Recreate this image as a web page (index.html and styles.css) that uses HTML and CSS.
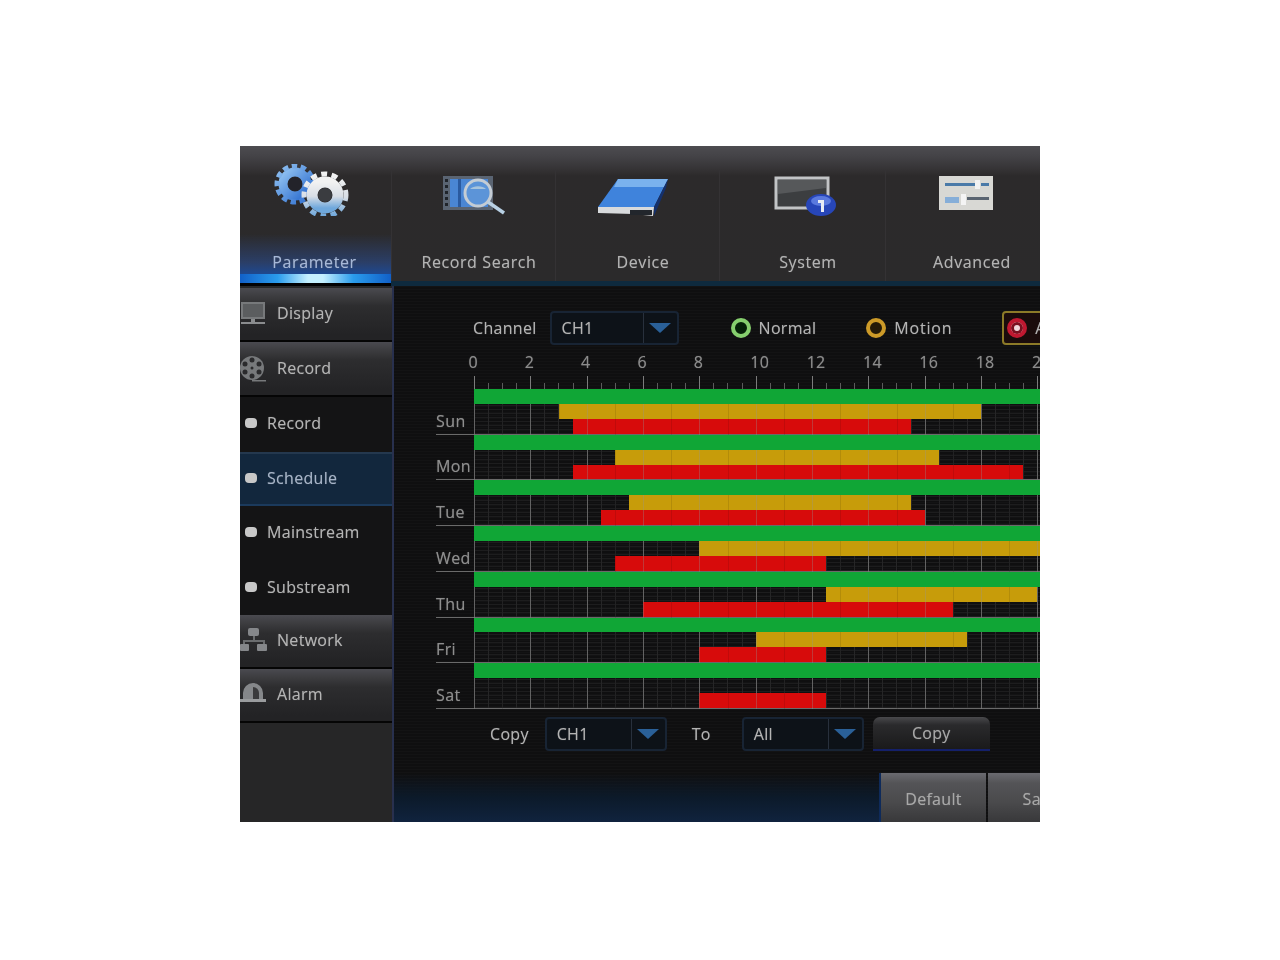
FILE: index.html
```html
<!DOCTYPE html>
<html lang="en">
<head>
<meta charset="utf-8">
<title>Schedule</title>
<link rel="stylesheet" href="styles.css">
</head>
<body>
<div class="app">
  <nav class="topbar">
    <div class="tab tab-active">
      <svg class="tab-icon icon-gears" width="84" height="52" viewBox="0 0 84 52">
        <defs>
          <linearGradient id="gw" x1="0" y1="0" x2="0" y2="1"><stop offset="0" stop-color="#f2f2f2"/><stop offset=".55" stop-color="#d8dee6"/><stop offset="1" stop-color="#6fa8dc"/></linearGradient>
          <linearGradient id="gb" x1="0" y1="0" x2="1" y2="1"><stop offset="0" stop-color="#8fc0f0"/><stop offset="1" stop-color="#2f6fd0"/></linearGradient>
        </defs>
        <circle cx="24" cy="20" r="12" fill="none" stroke="url(#gb)" stroke-width="9"/>
        <circle cx="24" cy="20" r="18" fill="none" stroke="url(#gb)" stroke-width="5" stroke-dasharray="5.5 3.5"/>
        <circle cx="24" cy="20" r="7" fill="#23232a"/>
        <circle cx="54" cy="31" r="13" fill="none" stroke="url(#gw)" stroke-width="11"/>
        <circle cx="54" cy="31" r="21" fill="none" stroke="url(#gw)" stroke-width="5" stroke-dasharray="6 4.5"/>
        <circle cx="54" cy="31" r="7" fill="#3a3c40"/>
      </svg>
      <span class="tab-label tab-label-active">Parameter</span>
    </div>
    <div class="tab">
      <svg class="tab-icon icon-search" width="64" height="42" viewBox="0 0 64 42">
        <rect x="1" y="2" width="50" height="34" fill="#5a6472"/>
        <rect x="8" y="5" width="38" height="28" fill="#4a86d4"/>
        <path d="M3 5h3v3H3zM3 11h3v3H3zM3 17h3v3H3zM3 23h3v3H3zM3 29h3v3H3z" fill="#20242a"/>
        <path d="M16 5h3v28h-3z" fill="#2a5aa0"/>
        <circle cx="36" cy="19" r="13" fill="#5c94d8" stroke="#c4ccd4" stroke-width="3"/>
        <path d="M28 15a10 7 0 0 1 16 0z" fill="#a8c4dc"/>
        <path d="M46 28l16 11" stroke="#b8d0e4" stroke-width="3.5"/>
      </svg>
      <span class="tab-label label-search">Record Search</span>
    </div>
    <div class="tab">
      <svg class="tab-icon icon-device" width="74" height="42" viewBox="0 0 74 42">
        <path d="M22 2h50L58 30H2z" fill="#3f83dc"/>
        <path d="M22 2h50l-4 8H18z" fill="#7ab2ee"/>
        <path d="M2 30h56l-1 9-20-2-35-1z" fill="#d8dadc"/>
        <path d="M58 30L72 2l-2 9-12 28z" fill="#14306c"/>
        <path d="M34 33h22v5H34z" fill="#22262c"/>
      </svg>
      <span class="tab-label label-device">Device</span>
    </div>
    <div class="tab">
      <svg class="tab-icon icon-system" width="64" height="42" viewBox="0 0 64 42">
        <rect x="2" y="2" width="52" height="30" fill="#3c3e40" stroke="#c2c4c6" stroke-width="3"/>
        <path d="M4 4h48v8L4 18z" fill="#56585a"/>
        <ellipse cx="47" cy="29" rx="15" ry="11" fill="#2746b8"/>
        <ellipse cx="47" cy="25" rx="10" ry="5" fill="#5b7ade"/>
        <path d="M44 24h6v12h-3V27h-3z" fill="#e8ecf4"/>
      </svg>
      <span class="tab-label label-system">System</span>
    </div>
    <div class="tab tab-last">
      <svg class="tab-icon icon-advanced" width="56" height="36" viewBox="0 0 56 36">
        <rect x="1" y="1" width="54" height="34" fill="#d8d8d4"/>
        <path d="M7 8h30v3H7zM43 8h8v3h-8z" fill="#4a7aa8"/>
        <path d="M7 22h14v6H7z" fill="#86aed8"/>
        <path d="M29 22h22v3H29z" fill="#5a6470"/>
        <rect x="37" y="5" width="5" height="9" fill="#f2f2f2"/>
        <rect x="23" y="19" width="5" height="11" fill="#f4f4f4"/>
      </svg>
      <span class="tab-label label-advanced">Advanced</span>
    </div>
  </nav>

  <div class="content">
    <aside class="sidebar">
      <div class="menu-item">
        <svg class="menu-icon" width="26" height="26" viewBox="0 0 26 26"><rect x="1" y="2" width="24" height="17" fill="#77797b"/><rect x="3" y="4" width="20" height="13" fill="#5b5d5f"/><path d="M11 19h4v3h-4zM1 22h24v2H1z" fill="#8a8c8e"/></svg>
        <span>Display</span>
      </div>
      <div class="menu-item">
        <svg class="menu-icon" width="26" height="28" viewBox="0 0 26 28"><circle cx="12" cy="14" r="12" fill="#77797b"/><g fill="#2a2a2c"><circle cx="12" cy="6" r="2.5"/><circle cx="12" cy="22" r="2.5"/><circle cx="5" cy="10" r="2.5"/><circle cx="19" cy="10" r="2.5"/><circle cx="5" cy="18" r="2.5"/><circle cx="19" cy="18" r="2.5"/><circle cx="12" cy="14" r="1.5"/></g><path d="M12 26h14v1.500H12z" fill="#77797b"/></svg>
        <span>Record</span>
      </div>
      <div class="sub-item"><i class="bullet"></i><span>Record</span></div>
      <div class="sub-item sub-active"><i class="bullet"></i><span>Schedule</span></div>
      <div class="sub-item"><i class="bullet"></i><span>Mainstream</span></div>
      <div class="sub-item"><i class="bullet"></i><span>Substream</span></div>
      <div class="menu-item">
        <svg class="menu-icon" width="28" height="26" viewBox="0 0 28 26"><rect x="8" y="1" width="11" height="8" rx="2" fill="#85878a"/><path d="M13 9h2v4h10v4h-2v-2H5v2H3v-4h10z" fill="#6a6c6e"/><rect x="0" y="17" width="9" height="7" rx="1" fill="#85878a"/><rect x="17" y="17" width="10" height="7" rx="1" fill="#85878a"/></svg>
        <span>Network</span>
      </div>
      <div class="menu-item">
        <svg class="menu-icon" width="26" height="24" viewBox="0 0 26 24"><path d="M3 18V12a10 10 0 0 1 20 0v6z" fill="#85878a"/><path d="M13 6a6 6 0 0 1 6 6v6h-6z" fill="#3a3a3c"/><path d="M0 18h26v3H0z" fill="#9a9c9e"/></svg>
        <span>Alarm</span>
      </div>
      <div class="sidebar-fill"></div>
    </aside>

    <main class="main">
      <div class="filter-row">
        <span class="field-label">Channel</span>
        <div class="select select-channel"><span class="select-value">CH1</span><span class="select-arrow"><i></i></span></div>
        <div class="legend legend-normal"><i class="ring ring-green"></i><span>Normal</span></div>
        <div class="legend legend-motion"><i class="ring ring-yellow"></i><span>Motion</span></div>
        <div class="legend legend-alarm"><i class="ring ring-red"></i><span>Alarm</span></div>
      </div>

      <div class="ruler">
        <span>0</span><span>2</span><span>4</span><span>6</span><span>8</span><span>10</span><span>12</span><span>14</span><span>16</span><span>18</span><span>20</span>
      </div>
      <div class="ticks"></div>

      <div class="schedule">
        <div class="day"><span class="day-name">Sun</span>
          <div class="tracks">
            <b class="bar green" style="grid-column:1/49"></b>
            <b class="bar yellow" style="grid-column:7/37"></b>
            <b class="bar red" style="grid-column:8/32"></b>
          </div></div>
        <div class="day"><span class="day-name">Mon</span>
          <div class="tracks">
            <b class="bar green" style="grid-column:1/49"></b>
            <b class="bar yellow" style="grid-column:11/34"></b>
            <b class="bar red" style="grid-column:8/40"></b>
          </div></div>
        <div class="day"><span class="day-name">Tue</span>
          <div class="tracks">
            <b class="bar green" style="grid-column:1/49"></b>
            <b class="bar yellow" style="grid-column:12/32"></b>
            <b class="bar red" style="grid-column:10/33"></b>
          </div></div>
        <div class="day"><span class="day-name">Wed</span>
          <div class="tracks">
            <b class="bar green" style="grid-column:1/49"></b>
            <b class="bar yellow" style="grid-column:17/49"></b>
            <b class="bar red" style="grid-column:11/26"></b>
          </div></div>
        <div class="day"><span class="day-name">Thu</span>
          <div class="tracks">
            <b class="bar green" style="grid-column:1/49"></b>
            <b class="bar yellow" style="grid-column:26/41"></b>
            <b class="bar red" style="grid-column:13/35"></b>
          </div></div>
        <div class="day"><span class="day-name">Fri</span>
          <div class="tracks">
            <b class="bar green" style="grid-column:1/49"></b>
            <b class="bar yellow" style="grid-column:21/36"></b>
            <b class="bar red" style="grid-column:17/26"></b>
          </div></div>
        <div class="day"><span class="day-name">Sat</span>
          <div class="tracks">
            <b class="bar green" style="grid-column:1/49"></b>
            <b class="bar red" style="grid-column:17/26"></b>
          </div></div>
      </div>

      <div class="copy-row">
        <span class="field-label copy-label">Copy</span>
        <div class="select select-copy"><span class="select-value">CH1</span><span class="select-arrow"><i></i></span></div>
        <span class="field-label to-label">To</span>
        <div class="select select-copy"><span class="select-value">All</span><span class="select-arrow"><i></i></span></div>
        <button class="copy-btn">Copy</button>
      </div>

      <div class="footer">
        <div class="footer-fill"></div>
        <button class="foot-btn">Default</button>
        <button class="foot-btn">Save</button>
      </div>
    </main>
  </div>
</div>
</body>
</html>
```

FILE: styles.css
```css
* { box-sizing: border-box; }
html, body { margin: 0; background: #fff; }
body {
  display: flex;
  justify-content: center;
  padding-top: 146px;
  height: 960px;
  overflow: hidden;
  font-family: "Open Sans", "Noto Sans", sans-serif;
  font-size: 16px;
  letter-spacing: .3px;
  color: #b4b4b4;
  text-shadow: 0 0 1px rgba(190,190,190,.45);
}
.app {
  width: 800px;
  height: 676px;
  overflow: hidden;
  display: flex;
  flex-direction: column;
  background: #2a2a2b;
  filter: blur(.6px);
}

/* top navigation */
.topbar {
  height: 140px;
  flex: none;
  display: flex;
  background: linear-gradient(#4d4c50 0, #444347 10px, #343234 24px, #2c2a2b 30px, #2b2a2b 100%);
  border-bottom: 5px solid #0e2a3e;
}
.tab {
  width: 164px;
  flex: none;
  display: flex;
  flex-direction: column;
  align-items: center;
  border-right: 1px solid;
  border-image: linear-gradient(transparent 24px, #343234 24px) 1;
}
.tab:nth-child(4) { width: 166px; }
.tab-active {
  width: 152px;
  background: linear-gradient(transparent 88px, #2b3e66 116px, #1c4a96 130px);
  position: relative;
}
.tab-active::after {
  content: "";
  position: absolute;
  left: 0; right: 0; bottom: -5px;
  height: 9px;
  border-bottom: 3px solid #020204;
  background: linear-gradient(90deg, #1160c8, #2a9cec 25%, #c4f0ff 45%, #c4f0ff 55%, #2a9cec 75%, #1160c8);
}
.tab-last { width: 170px; border-right: 0; }
.tab-icon { flex: none; filter: blur(.5px); }
.icon-gears { margin: 18px 6px 0 0; height: 52px; }
.icon-search { margin-top: 28px; height: 42px; }
.icon-device { margin: 31px 10px 0 0; height: 42px; }
.icon-system { margin: 30px 0 0 6px; height: 42px; }
.icon-advanced { margin: 29px 10px 0 0; height: 36px; }
.tab-label { margin-top: auto; margin-bottom: 9px; line-height: 20px; white-space: nowrap; letter-spacing: .6px; }
.tab-label-active { color: #a6b8d8; margin-right: 2px; }
.label-search { margin-left: 11px; }
.label-device { margin-left: 11px; }
.label-system { margin-left: 11px; }
.label-advanced { margin-left: 2px; }

/* body */
.content { flex: 1; min-height: 0; display: flex; }
.sidebar {
  width: 154px;
  flex: none;
  display: flex;
  flex-direction: column;
  padding-top: 2px;
  background: #262627;
  border-right: 2px solid #28304e;
}
.menu-item {
  height: 54px;
  flex: none;
  display: flex;
  align-items: center;
  padding-bottom: 2px;
  background: linear-gradient(#4a4a50 0, #3d3d40 8px, #2d2d2f 18px, #232325 90%);
  border-bottom: 2px solid #050505;
  position: relative;
}
.menu-item:nth-child(2) { height: 55px; }
.menu-icon { position: absolute; left: 0; top: 12px; }
.menu-item span { margin-left: 37px; }
.sub-item {
  height: 54.500px;
  flex: none;
  display: flex;
  align-items: center;
  padding-bottom: 2px;
  background: #141415;
}
.sub-active {
  background: #12273d;
  border-top: 2px solid #24384e;
  border-bottom: 2px solid #1b3a5c;
  color: #a6b4c8;
}
.bullet {
  width: 12px; height: 10px;
  margin: 0 10px 0 5px;
  border-radius: 4px;
  background: #c8c8c8;
}
.sidebar-fill { flex: 1; }

/* main panel */
.main {
  flex: 1;
  min-width: 0;
  display: flex;
  flex-direction: column;
  background:
    repeating-linear-gradient(#131314 0 1px, #0f0f10 1px 3px);
  overflow: hidden;
}
.filter-row {
  height: 34px;
  margin-top: 25px;
  padding-left: 79px;
  display: flex;
  align-items: center;
  flex: none;
}
.field-label { white-space: nowrap; }
.select {
  height: 34px;
  flex: none;
  display: flex;
  border: 2px solid #182434;
  border-radius: 4px;
  background: #0d1218;
}
.select-channel { width: 129px; margin-left: 13px; }
.select-copy { width: 122px; }
.select-value { flex: 1; padding-left: 10px; line-height: 30px; }
.select-arrow {
  width: 34px;
  display: flex;
  align-items: center;
  justify-content: center;
  border-left: 1px solid #28303c;
}
.select-arrow i {
  border-left: 11px solid transparent;
  border-right: 11px solid transparent;
  border-top: 10px solid #2a6098;
}
.legend { display: flex; align-items: center; flex: none; gap: 8px; }
.legend-normal { margin-left: 52px; }
.legend-motion { margin-left: 50px; letter-spacing: .8px; }
.legend-alarm {
  margin-left: 50px;
  height: 34px;
  padding: 0 10px 0 3px;
  gap: 8px;
  border: 2px solid #8c7a28;
  border-radius: 4px;
  background: #1a0c0c;
}
.ring { width: 20px; height: 20px; border-radius: 50%; flex: none; border: 4px solid; background: #0e0e0e; }
.ring-green { border-color: #86cf6e; background: #062208; }
.ring-yellow { border-color: #cc9a28; background: #241a08; }
.ring-red { border-color: #c01830; background: #f0d8dc; box-shadow: inset 0 0 0 3px #7a1020; }

.ruler {
  display: flex;
  margin: 7px 0 0 51px;
  height: 20px;
  line-height: 20px;
  flex: none;
  color: #8c8c8c;
}
.ruler span { width: 56.333px; flex: none; text-align: center; }
.ruler span:nth-child(n+6) { padding-left: 10px; }
.ticks {
  flex: none;
  height: 13px;
  margin: 4px 0 0 80px;
  width: 676px;
  background:
    repeating-linear-gradient(90deg, #7c7c7c 0 1px, transparent 1px 56.333px),
    repeating-linear-gradient(90deg, #5c5c5c 0 1px, transparent 1px 14.083px) 0 7px / 100% 6px no-repeat;
}

.schedule {
  flex: none;
  height: 320px;
  margin-left: 42px;
  display: grid;
  grid-template-rows: repeat(7, 1fr);
  width: 714px;
  position: relative;
}
.schedule::after {
  content: "";
  position: absolute;
  top: 0; bottom: 0; left: 38px; width: 676px;
  background-image: repeating-linear-gradient(90deg, rgba(190,190,190,.26) 0 1px, transparent 1px 56.333px), repeating-linear-gradient(90deg, rgba(0,0,0,.1) 0 1px, transparent 1px 28.167px);
  pointer-events: none;
}
.day { display: flex; min-height: 0; border-bottom: 1px solid #6a6a6a; }
.day-name {
  width: 38px;
  flex: none;
  align-self: flex-end;
  line-height: 22px;
  padding-bottom: 2px;
  color: #8e8e8e;
  letter-spacing: .4px;
}
.tracks {
  flex: 1;
  display: grid;
  grid-template-columns: repeat(48, 1fr);
  grid-template-rows: repeat(3, 1fr);
  background:
    repeating-linear-gradient(90deg, #4a4a4a 0 1px, transparent 1px 56.333px),
    repeating-linear-gradient(90deg, #262627 0 1px, transparent 1px 14.083px),
    repeating-linear-gradient(#1d1d1e 0 1px, transparent 1px 4px);
}
.bar { display: block; }
.green { grid-row: 1; background: #10a636; position: relative; z-index: 1; }
.yellow { grid-row: 2; background: #c79c0a; }
.red { grid-row: 3; background: #d70b0b; }

.copy-row {
  flex: none;
  height: 34px;
  margin-top: 8px;
  padding-left: 96px;
  display: flex;
  align-items: center;
}
.copy-label { margin-right: 16px; }
.to-label { margin: 0 31px 0 25px; }
.copy-btn, .foot-btn {
  font: inherit;
  letter-spacing: inherit;
  text-shadow: inherit;
  color: #a8a8a8;
  border: 0;
  padding: 0;
  flex: none;
}
.copy-btn {
  width: 117px;
  height: 34px;
  margin-left: 9px;
  border-radius: 7px 7px 0 0;
  background: linear-gradient(#49494c 0, #2a2a2c 8px, #1a1a1b 100%);
  border-bottom: 2px solid #14206a;
}
.footer {
  flex: none;
  height: 49px;
  margin-top: 22px;
  display: flex;
}
.footer-fill {
  width: 487px;
  flex: none;
  background: linear-gradient(transparent 0, #0c1a2a 50%, #10233e 100%);
  border-right: 2px solid #0e2a5a;
}
.foot-btn {
  width: 105px;
  margin-right: 2px;
  padding-top: 2px;
  background: linear-gradient(#6a6a70 0, #545457 10px, #4a4a4c 60%, #38383a 100%);
}
```
